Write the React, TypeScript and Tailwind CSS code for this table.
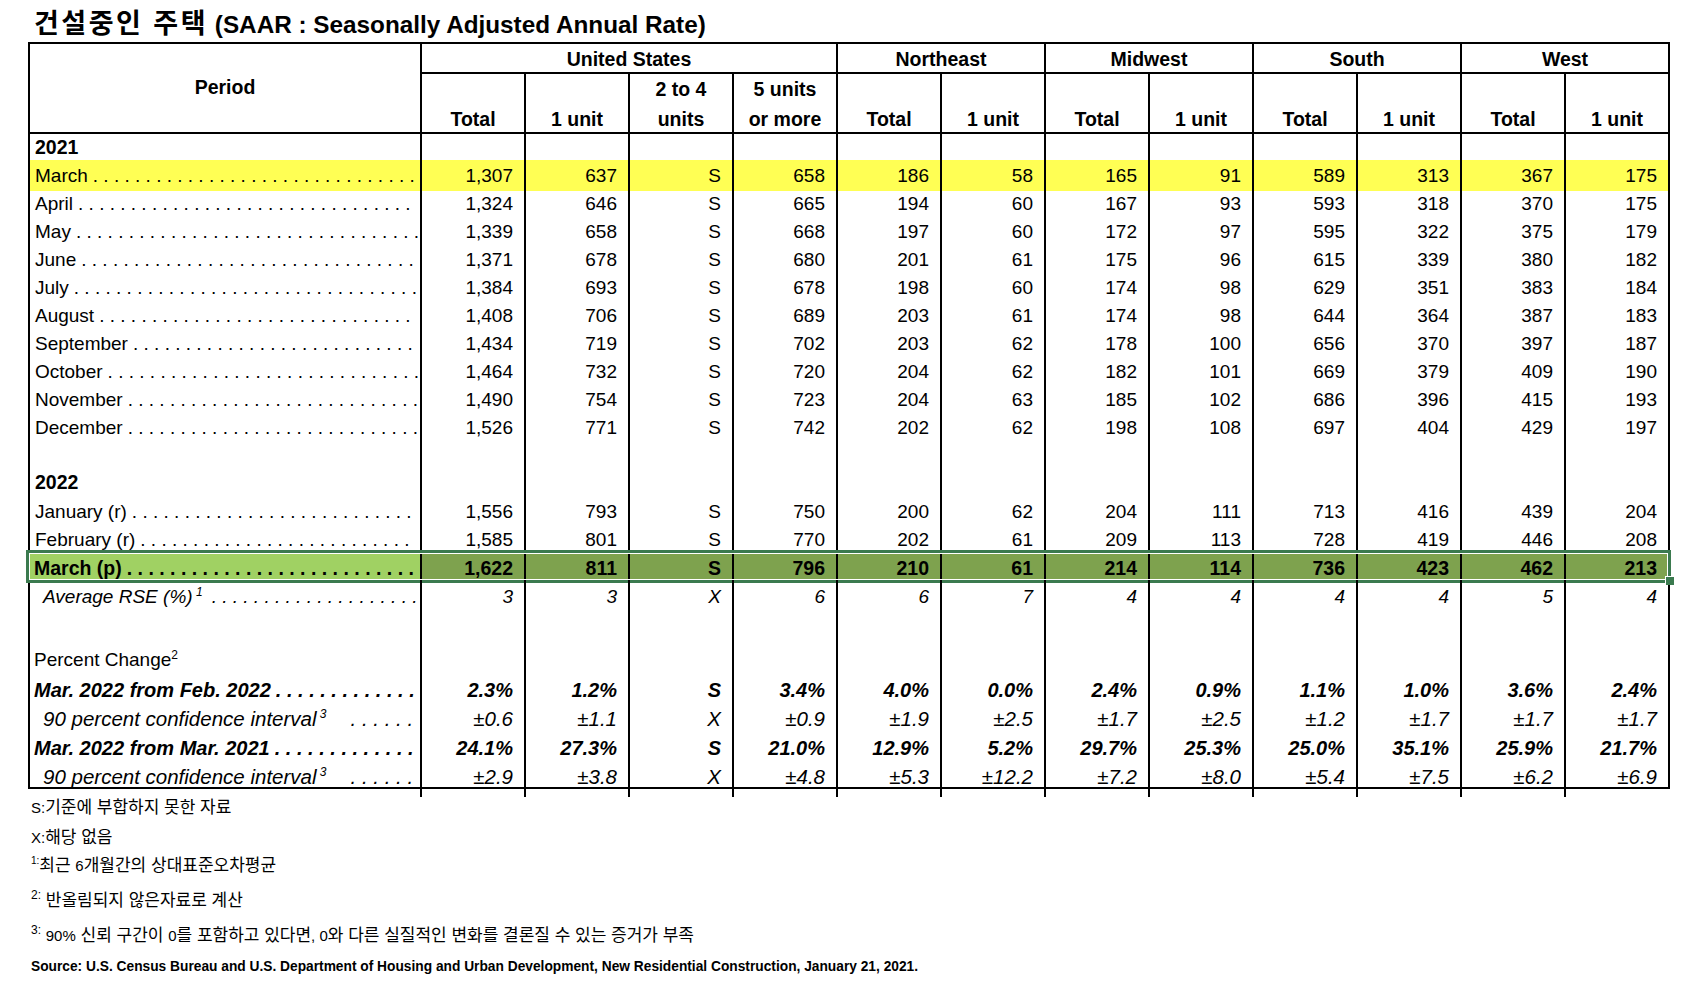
import React, { useLayoutEffect, useRef, useState } from 'react';

type Kind = 'year' | 'month' | 'blank' | 'bold' | 'rse' | 'pc' | 'bi' | 'ci';

interface Row {
  label?: React.ReactNode;
  vals?: string[];
  h: string;
  kind: Kind;
  fill?: 'y' | 'g';
}

const EMPTY = Array(12).fill('');

const sv = (s: string) => s.split(' ');

const rows: Row[] = [
  { label: '2021', kind: 'year', h: 'h-[26px]', vals: EMPTY },
  { label: 'March', kind: 'month', h: 'h-[28px]', fill: 'y', vals: sv('1,307 637 S 658 186 58 165 91 589 313 367 175') },
  { label: 'April', kind: 'month', h: 'h-[28px]', vals: sv('1,324 646 S 665 194 60 167 93 593 318 370 175') },
  { label: 'May', kind: 'month', h: 'h-[28px]', vals: sv('1,339 658 S 668 197 60 172 97 595 322 375 179') },
  { label: 'June', kind: 'month', h: 'h-[28px]', vals: sv('1,371 678 S 680 201 61 175 96 615 339 380 182') },
  { label: 'July', kind: 'month', h: 'h-[28px]', vals: sv('1,384 693 S 678 198 60 174 98 629 351 383 184') },
  { label: 'August', kind: 'month', h: 'h-[28px]', vals: sv('1,408 706 S 689 203 61 174 98 644 364 387 183') },
  { label: 'September', kind: 'month', h: 'h-[28px]', vals: sv('1,434 719 S 702 203 62 178 100 656 370 397 187') },
  { label: 'October', kind: 'month', h: 'h-[28px]', vals: sv('1,464 732 S 720 204 62 182 101 669 379 409 190') },
  { label: 'November', kind: 'month', h: 'h-[28px]', vals: sv('1,490 754 S 723 204 63 185 102 686 396 415 193') },
  { label: 'December', kind: 'month', h: 'h-[28px]', vals: sv('1,526 771 S 742 202 62 198 108 697 404 429 197') },
  { kind: 'blank', h: 'h-[28px]', vals: EMPTY },
  { label: '2022', kind: 'year', h: 'h-[28px]', vals: EMPTY },
  { label: 'January (r)', kind: 'month', h: 'h-[28px]', vals: sv('1,556 793 S 750 200 62 204 111 713 416 439 204') },
  { label: 'February (r)', kind: 'month', h: 'h-[28px]', vals: sv('1,585 801 S 770 202 61 209 113 728 419 446 208') },
  { label: 'March (p)', kind: 'bold', h: 'h-[28px]', fill: 'g', vals: sv('1,622 811 S 796 210 61 214 114 736 423 462 213') },
  {
    label: (
      <>
        Average RSE (%)<span className="align-super text-[12px]"> 1</span>
      </>
    ),
    kind: 'rse',
    h: 'h-[28px]',
    vals: sv('3 3 X 6 6 7 4 4 4 4 5 4'),
  },
  { kind: 'blank', h: 'h-[36px]', vals: EMPTY },
  {
    label: (
      <>
        Percent Change<span className="align-super text-[12px]">2</span>
      </>
    ),
    kind: 'pc',
    h: 'h-[29px]',
    vals: EMPTY,
  },
  { label: 'Mar. 2022 from Feb. 2022', kind: 'bi', h: 'h-[31px]', vals: sv('2.3% 1.2% S 3.4% 4.0% 0.0% 2.4% 0.9% 1.1% 1.0% 3.6% 2.4%') },
  {
    label: (
      <>
        90 percent confidence interval<span className="align-super text-[12px]"> 3</span>
      </>
    ),
    kind: 'ci',
    h: 'h-[27px]',
    vals: sv('±0.6 ±1.1 X ±0.9 ±1.9 ±2.5 ±1.7 ±2.5 ±1.2 ±1.7 ±1.7 ±1.7'),
  },
  { label: 'Mar. 2022 from Mar. 2021', kind: 'bi', h: 'h-[31px]', vals: sv('24.1% 27.3% S 21.0% 12.9% 5.2% 29.7% 25.3% 25.0% 35.1% 25.9% 21.7%') },
  {
    label: (
      <>
        90 percent confidence interval<span className="align-super text-[12px]"> 3</span>
      </>
    ),
    kind: 'ci',
    h: 'h-[25px]',
    vals: sv('±2.9 ±3.8 X ±4.8 ±5.3 ±12.2 ±7.2 ±8.0 ±5.4 ±7.5 ±6.2 ±6.9'),
  },
];

const kindText: Record<Kind, string> = {
  year: 'text-[19.5px] font-bold',
  month: 'text-[19px]',
  blank: 'text-[19px]',
  bold: 'text-[19.5px] font-bold',
  rse: 'text-[19px] italic',
  pc: 'text-[19px]',
  bi: 'text-[20px] font-bold italic',
  ci: 'text-[20.5px] italic',
};

// vertical nudge of the text inside each cell (shifts the centred line)
const kindPad: Record<Kind, string> = {
  year: 'pt-[2px]',
  month: 'pt-[2px]',
  blank: '',
  bold: 'pt-[2px]',
  rse: 'pt-[3px]',
  pc: 'pt-[4px]',
  bi: 'pt-[2px]',
  ci: 'pb-[4px]',
};

const kindPl: Record<Kind, string> = {
  year: 'pl-[5px]',
  month: 'pl-[5px]',
  blank: 'pl-[5px]',
  bold: 'pl-[4px]',
  rse: 'pl-[13px]',
  pc: 'pl-[4px]',
  bi: 'pl-[4px]',
  ci: 'pl-[13px]',
};

const kindGap: Record<Kind, string> = {
  year: '',
  month: 'ml-[5px]',
  blank: '',
  bold: 'ml-[5px]',
  rse: 'ml-[9px]',
  pc: '',
  bi: 'ml-[5px]',
  ci: 'ml-[24px]',
};

const hasDots = (k: Kind) => k === 'month' || k === 'bold' || k === 'rse' || k === 'bi' || k === 'ci';

// dot leader that fills the remaining width of the Period cell
function Dots({ gap }: { gap: string }) {
  const outer = useRef<HTMLSpanElement>(null);
  const inner = useRef<HTMLSpanElement>(null);
  const [n, setN] = useState<number | null>(null);
  useLayoutEffect(() => {
    if (!outer.current || !inner.current) return;
    const pair = inner.current.getBoundingClientRect().width / 40;
    const avail = outer.current.getBoundingClientRect().width;
    if (pair > 0) setN(Math.max(1, Math.floor((avail - pair * 0.5) / pair) + 1));
  }, []);
  const text = n === null ? '. '.repeat(40) : '. '.repeat(n - 1) + '.';
  return (
    <span ref={outer} className={`min-w-0 flex-1 overflow-hidden whitespace-pre ${gap}`}>
      <span ref={inner}>{text}</span>
    </span>
  );
}

function BodyRow({ row }: { row: Row }) {
  const labelBg = row.fill === 'y' ? 'bg-[#ffff54]' : row.fill === 'g' ? 'bg-[#a0d163]' : '';
  const dataBg = row.fill === 'y' ? 'bg-[#ffff54]' : row.fill === 'g' ? 'bg-[#7ea24e]' : '';
  const pad = kindPad[row.kind];
  return (
    <div className={`relative grid grid-cols-[390px_repeat(12,104px)] ${row.h} ${kindText[row.kind]}`}>
      <div className={`flex min-w-0 items-center overflow-hidden whitespace-nowrap ${pad} ${kindPl[row.kind]} ${labelBg}`}>
        {row.label !== undefined && <span className="shrink-0">{row.label}</span>}
        {hasDots(row.kind) && <Dots gap={kindGap[row.kind]} />}
      </div>
      {(row.vals ?? EMPTY).map((v, i) => (
        <div key={i} className={`flex items-center justify-end whitespace-nowrap border-l-2 border-black pr-[11px] ${pad} ${dataBg}`}>
          {v}
        </div>
      ))}
      {row.fill === 'g' && (
        <>
          <div className="pointer-events-none absolute -left-[4px] -right-[3px] -top-[2px] -bottom-[3px] border-[3px] border-[#3b7a4f] shadow-[inset_0_0_0_1px_#ffffff]" />
          <div className="pointer-events-none absolute -right-[6px] -bottom-[5px] h-[9px] w-[9px] border-l border-t border-white bg-[#3b7a4f]" />
        </>
      )}
    </div>
  );
}

function Sub({ children }: { children: React.ReactNode }) {
  return (
    <div className="flex items-end justify-center border-l-2 border-b-2 border-black text-center">
      <div className="-mb-[2px] leading-[30px]">{children}</div>
    </div>
  );
}

export default function App() {
  const grp = 'flex items-center justify-center border-l-2 border-b-2 border-black pt-[4px]';
  return (
    <div className="min-h-[986px] w-[1690px] bg-white text-black font-[family-name:'Liberation_Sans','Noto_Sans_CJK_KR',sans-serif]">
      <div className="h-[42px] whitespace-nowrap pl-[34px] pt-[6px] font-bold leading-[36px]">
        <span className="text-[27px] tracking-[2.5px]">건설중인 주택</span>
        <span className="text-[24.3px]"> (SAAR : Seasonally Adjusted Annual Rate)</span>
      </div>

      <div className="ml-[28px] w-[1642px] border-2 border-black">
        <div className="grid grid-cols-[390px_repeat(12,104px)] grid-rows-[30px_60px] text-[19.5px] font-bold">
          <div className="row-span-2 flex items-center justify-center border-b-2 border-black">Period</div>
          <div className={`col-span-4 ${grp}`}>United States</div>
          <div className={`col-span-2 ${grp}`}>Northeast</div>
          <div className={`col-span-2 ${grp}`}>Midwest</div>
          <div className={`col-span-2 ${grp}`}>South</div>
          <div className={`col-span-2 ${grp}`}>West</div>
          <Sub>Total</Sub>
          <Sub>1 unit</Sub>
          <Sub>
            2 to 4
            <br />
            units
          </Sub>
          <Sub>
            5 units
            <br />
            or more
          </Sub>
          <Sub>Total</Sub>
          <Sub>1 unit</Sub>
          <Sub>Total</Sub>
          <Sub>1 unit</Sub>
          <Sub>Total</Sub>
          <Sub>1 unit</Sub>
          <Sub>Total</Sub>
          <Sub>1 unit</Sub>
        </div>
        {rows.map((r, i) => (
          <BodyRow key={i} row={r} />
        ))}
      </div>

      <div className="whitespace-nowrap pl-[31px]">
        <div className="h-[34px] text-[17px] leading-[38px]">
          <span className="text-[15px]">S:</span>기준에 부합하지 못한 자료
        </div>
        <div className="h-[26px] text-[17px] leading-[29px]">
          <span className="text-[15px]">X:</span>해당 없음
        </div>
        <div className="h-[26px] text-[17px] leading-[24px]">
          <span className="align-super text-[10px]">1:</span>최근 <span className="text-[15px]">6</span>개월간의 상대표준오차평균
        </div>
        <div className="h-[42px] text-[17px] leading-[40px]">
          <span className="align-super text-[12px]">2:</span> 반올림되지 않은자료로 계산
        </div>
        <div className="h-[33px] text-[17px] leading-[26px]">
          <span className="align-super text-[12px]">3:</span> <span className="text-[15px]">90%</span> 신뢰 구간이{' '}
          <span className="text-[15px]">0</span>를 포함하고 있다면<span className="text-[15px]">, 0</span>와 다른 실질적인 변화를 결론질 수 있는 증거가 부족
        </div>
        <div className="h-[32px] text-[13.75px] font-bold leading-[34px]">
          Source: U.S. Census Bureau and U.S. Department of Housing and Urban Development, New Residential Construction, January 21, 2021.
        </div>
      </div>
    </div>
  );
}
